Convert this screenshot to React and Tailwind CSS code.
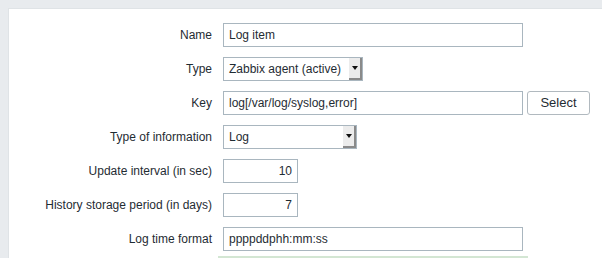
/**
 * App.jsx — formular "item" (Zabbix), rand cu rand
 */

const FONT = { fontFamily: '"Liberation Sans", Arial, sans-serif' };

function TextInput({ value, width, right }) {
  return (
    <div
      className={`h-6 border border-[#a9b6bf] bg-white flex items-center px-[5px] text-[12px] text-[#1f2c33] ${right ? "justify-end" : ""}`}
      style={{ width }}
    >
      {value}
    </div>
  );
}

function FakeSelect({ value, width }) {
  return (
    <div className="h-6 border border-[#a9b6bf] bg-white flex items-stretch text-[12px] text-[#1f2c33]" style={{ width }}>
      <div className="flex-1 flex items-center pl-[5px]">{value}</div>
      {/* butonul cu sageata, stil nativ */}
      <div className="w-[13px] bg-[#ececec] border-r-2 border-b-2 border-[#8a8a8a] flex items-center justify-center">
        <svg width="6" height="4" viewBox="0 0 6 4">
          <path d="M0 0H6L3 4Z" fill="#111" />
        </svg>
      </div>
    </div>
  );
}

function Row({ label, children }) {
  return (
    <>
      <div className="h-6 flex items-center justify-end text-[12px] text-[#1f2c33]">{label}</div>
      <div className="flex items-center gap-1">{children}</div>
    </>
  );
}

export default function App() {
  return (
    <div className="w-[602px] h-[258px] overflow-hidden bg-[#e8ebee] pt-2 pl-2" style={FONT}>
      <div className="bg-white h-full border-t border-l border-[#dfe3e6] pt-[14px]">
        <div className="grid grid-cols-[203px_auto] gap-x-[11px] gap-y-[10px]">
          <Row label="Name">
            <TextInput value="Log item" width={300} />
          </Row>
          <Row label="Type">
            <FakeSelect value="Zabbix agent (active)" width={140} />
          </Row>
          <Row label="Key">
            <TextInput value="log[/var/log/syslog,error]" width={300} />
            <button className="h-6 w-[63px] border border-[#b1b9bf] rounded-[3px] bg-white text-[13px] text-[#1f2c33]">
              Select
            </button>
          </Row>
          <Row label="Type of information">
            <FakeSelect value="Log" width={134} />
          </Row>
          <Row label="Update interval (in sec)">
            <TextInput value="10" width={75} right />
          </Row>
          <Row label="History storage period (in days)">
            <TextInput value="7" width={75} right />
          </Row>
          <Row label="Log time format">
            <TextInput value="ppppddphh:mm:ss" width={300} />
          </Row>
          <div />
          <div className="ml-[-5px] w-[310px] border-t-2 border-[#d3e6d3] mt-[-5px]" />
        </div>
      </div>
    </div>
  );
}
